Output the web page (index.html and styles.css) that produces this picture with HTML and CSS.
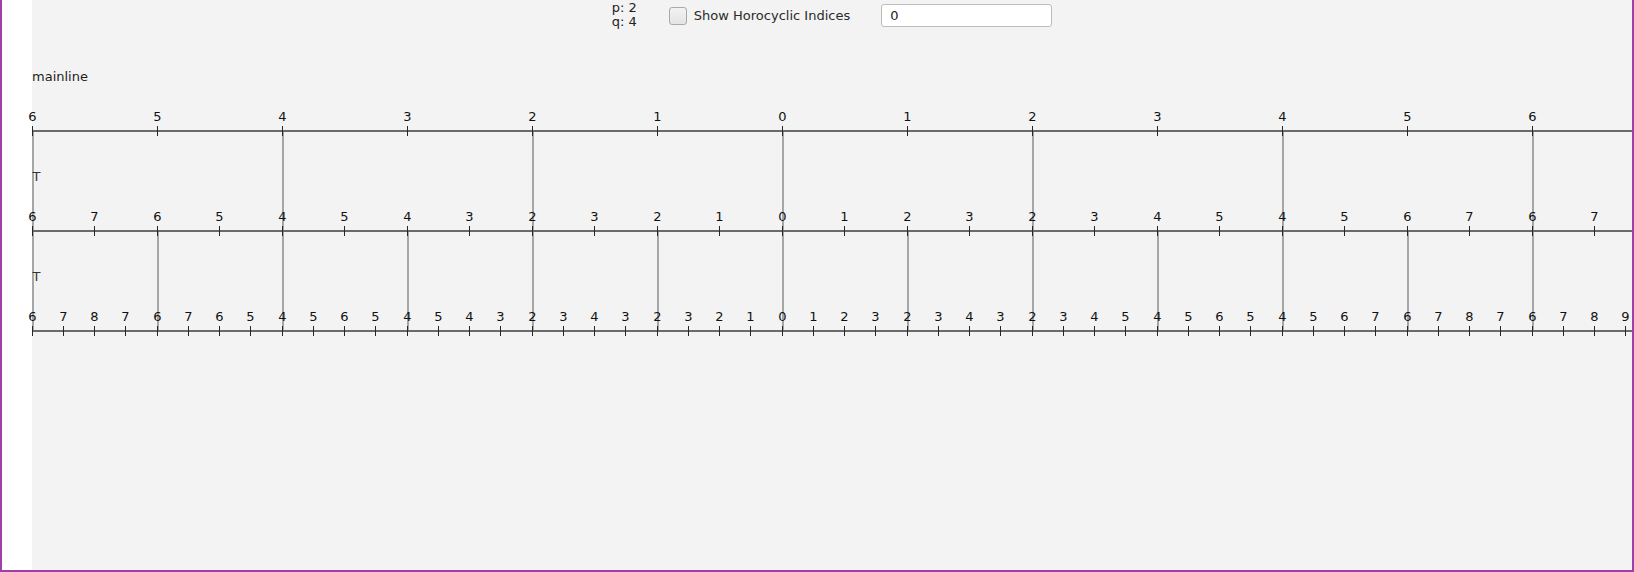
FILE: index.html
```html
<!DOCTYPE html>
<html>
<head>
<meta charset="utf-8">
<title>Horocyclic</title>
<link rel="stylesheet" href="styles.css">
</head>
<body>
<div class="frame">
  <div class="gutter"></div>
  <div class="panel">
    <div class="header">
      <div class="pq">p: 2<br>q: 4</div>
      <label class="check"><span class="box"></span><span class="check-text">Show Horocyclic Indices</span></label>
      <div class="field">0</div>
    </div>
    <svg class="canvas" width="1600" height="539" viewBox="32 31 1600 539" xmlns="http://www.w3.org/2000/svg">
      <text class="title" x="32" y="81">mainline</text>
      <path class="conn" d="M33 132V230M283 132V230M533 132V230M783 132V230M1033 132V230M1283 132V230M1533 132V230"/>
      <path class="conn" d="M33 232V330M158 232V330M283 232V330M408 232V330M533 232V330M658 232V330M783 232V330M908 232V330M1033 232V330M1158 232V330M1283 232V330M1408 232V330M1533 232V330"/>
      <line class="axis" x1="32" y1="131" x2="1632" y2="131"/>
      <line class="axis" x1="32" y1="231" x2="1632" y2="231"/>
      <line class="axis" x1="32" y1="331" x2="1632" y2="331"/>
      <path class="tick" d="M32.5 126v10M157.5 126v10M282.5 126v10M407.5 126v10M532.5 126v10M657.5 126v10M782.5 126v10M907.5 126v10M1032.5 126v10M1157.5 126v10M1282.5 126v10M1407.5 126v10M1532.5 126v10"/>
      <path class="tick" d="M32.5 226v10M94.5 226v10M157.5 226v10M219.5 226v10M282.5 226v10M344.5 226v10M407.5 226v10M469.5 226v10M532.5 226v10M594.5 226v10M657.5 226v10M719.5 226v10M782.5 226v10M844.5 226v10M907.5 226v10M969.5 226v10M1032.5 226v10M1094.5 226v10M1157.5 226v10M1219.5 226v10M1282.5 226v10M1344.5 226v10M1407.5 226v10M1469.5 226v10M1532.5 226v10M1594.5 226v10"/>
      <path class="tick" d="M32.5 326v10M63.5 326v10M94.5 326v10M125.5 326v10M157.5 326v10M188.5 326v10M219.5 326v10M250.5 326v10M282.5 326v10M313.5 326v10M344.5 326v10M375.5 326v10M407.5 326v10M438.5 326v10M469.5 326v10M500.5 326v10M532.5 326v10M563.5 326v10M594.5 326v10M625.5 326v10M657.5 326v10M688.5 326v10M719.5 326v10M750.5 326v10M782.5 326v10M813.5 326v10M844.5 326v10M875.5 326v10M907.5 326v10M938.5 326v10M969.5 326v10M1000.5 326v10M1032.5 326v10M1063.5 326v10M1094.5 326v10M1125.5 326v10M1157.5 326v10M1188.5 326v10M1219.5 326v10M1250.5 326v10M1282.5 326v10M1313.5 326v10M1344.5 326v10M1375.5 326v10M1407.5 326v10M1438.5 326v10M1469.5 326v10M1500.5 326v10M1532.5 326v10M1563.5 326v10M1594.5 326v10M1625.5 326v10"/>
      <g class="lbl">
        <text x="32.5" y="121">6</text><text x="157.5" y="121">5</text><text x="282.5" y="121">4</text><text x="407.5" y="121">3</text><text x="532.5" y="121">2</text><text x="657.5" y="121">1</text><text x="782.5" y="121">0</text><text x="907.5" y="121">1</text><text x="1032.5" y="121">2</text><text x="1157.5" y="121">3</text><text x="1282.5" y="121">4</text><text x="1407.5" y="121">5</text><text x="1532.5" y="121">6</text>
      </g>
      <g class="lbl">
        <text x="32.5" y="221">6</text><text x="94.5" y="221">7</text><text x="157.5" y="221">6</text><text x="219.5" y="221">5</text><text x="282.5" y="221">4</text><text x="344.5" y="221">5</text><text x="407.5" y="221">4</text><text x="469.5" y="221">3</text><text x="532.5" y="221">2</text><text x="594.5" y="221">3</text><text x="657.5" y="221">2</text><text x="719.5" y="221">1</text><text x="782.5" y="221">0</text><text x="844.5" y="221">1</text><text x="907.5" y="221">2</text><text x="969.5" y="221">3</text><text x="1032.5" y="221">2</text><text x="1094.5" y="221">3</text><text x="1157.5" y="221">4</text><text x="1219.5" y="221">5</text><text x="1282.5" y="221">4</text><text x="1344.5" y="221">5</text><text x="1407.5" y="221">6</text><text x="1469.5" y="221">7</text><text x="1532.5" y="221">6</text><text x="1594.5" y="221">7</text>
      </g>
      <g class="lbl">
        <text x="32.5" y="321">6</text><text x="63.5" y="321">7</text><text x="94.5" y="321">8</text><text x="125.5" y="321">7</text><text x="157.5" y="321">6</text><text x="188.5" y="321">7</text><text x="219.5" y="321">6</text><text x="250.5" y="321">5</text><text x="282.5" y="321">4</text><text x="313.5" y="321">5</text><text x="344.5" y="321">6</text><text x="375.5" y="321">5</text><text x="407.5" y="321">4</text><text x="438.5" y="321">5</text><text x="469.5" y="321">4</text><text x="500.5" y="321">3</text><text x="532.5" y="321">2</text><text x="563.5" y="321">3</text><text x="594.5" y="321">4</text><text x="625.5" y="321">3</text><text x="657.5" y="321">2</text><text x="688.5" y="321">3</text><text x="719.5" y="321">2</text><text x="750.5" y="321">1</text><text x="782.5" y="321">0</text><text x="813.5" y="321">1</text><text x="844.5" y="321">2</text><text x="875.5" y="321">3</text><text x="907.5" y="321">2</text><text x="938.5" y="321">3</text><text x="969.5" y="321">4</text><text x="1000.5" y="321">3</text><text x="1032.5" y="321">2</text><text x="1063.5" y="321">3</text><text x="1094.5" y="321">4</text><text x="1125.5" y="321">5</text><text x="1157.5" y="321">4</text><text x="1188.5" y="321">5</text><text x="1219.5" y="321">6</text><text x="1250.5" y="321">5</text><text x="1282.5" y="321">4</text><text x="1313.5" y="321">5</text><text x="1344.5" y="321">6</text><text x="1375.5" y="321">7</text><text x="1407.5" y="321">6</text><text x="1438.5" y="321">7</text><text x="1469.5" y="321">8</text><text x="1500.5" y="321">7</text><text x="1532.5" y="321">6</text><text x="1563.5" y="321">7</text><text x="1594.5" y="321">8</text><text x="1625.5" y="321">9</text>
      </g>
      <text class="tee" x="32.5" y="181">T</text>
      <text class="tee" x="32.5" y="281">T</text>
    </svg>
  </div>
</div>
</body>
</html>
```
FILE: styles.css
```css
html, body {
  margin: 0;
  padding: 0;
  background: #ffffff;
}

.frame {
  box-sizing: border-box;
  width: 1634px;
  height: 572px;
  display: flex;
  border-left: 2px solid #a03fa8;
  border-right: 2px solid #a03fa8;
  border-bottom: 2px solid #a03fa8;
  font-family: "DejaVu Sans", sans-serif;
  font-size: 13px;
  color: #222222;
}

.gutter {
  width: 30px;
  flex: none;
  background: #ffffff;
}

.panel {
  flex: 1;
  background: #f3f3f3;
  display: flex;
  flex-direction: column;
  overflow: visible;
}

.header {
  height: 31px;
  flex: none;
  display: flex;
  align-items: center;
  justify-content: center;
}

.pq {
  align-self: flex-start;
  margin-top: 1px;
  line-height: 13.5px;
  color: #222222;
}

.check {
  display: flex;
  align-items: center;
  margin-left: 32px;
}

.box {
  box-sizing: border-box;
  width: 18px;
  height: 18px;
  border: 1px solid #aaaaaa;
  border-radius: 3px;
  background: linear-gradient(#f2f2f2, #e4e4e4);
}

.check-text {
  margin-left: 7px;
  color: #2a2a2a;
}

.field {
  box-sizing: border-box;
  width: 171px;
  height: 23px;
  margin-left: 31px;
  border: 1px solid #bdbdbd;
  border-radius: 3px;
  background: #ffffff;
  padding-left: 8px;
  line-height: 21px;
  color: #222222;
}

.canvas {
  display: block;
  flex: none;
  overflow: visible;
}

.title {
  font-family: "DejaVu Sans", sans-serif;
  font-size: 13px;
  fill: #1e1e1e;
}

.conn {
  stroke: #a6a6a6;
  stroke-width: 2;
  fill: none;
}

.axis {
  stroke: #6a6a6a;
  stroke-width: 2;
}

.tick {
  stroke: #262626;
  stroke-width: 1;
  fill: none;
}

.lbl text {
  font-family: "DejaVu Sans", sans-serif;
  font-size: 13px;
  fill: #111111;
  text-anchor: middle;
}

.tee {
  font-family: "DejaVu Sans", sans-serif;
  font-size: 13px;
  fill: #333333;
}
```
